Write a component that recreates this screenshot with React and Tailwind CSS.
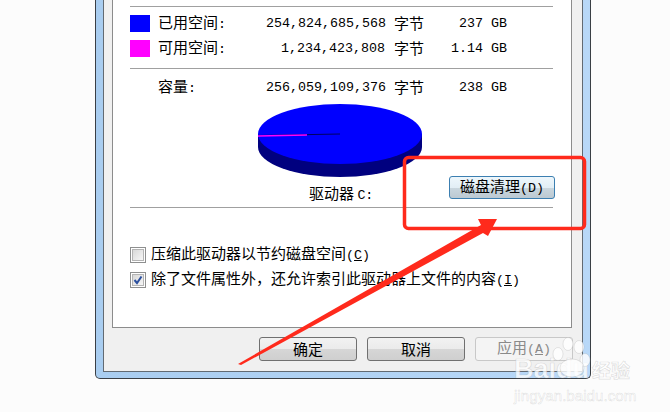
const mono = "font-['Liberation_Mono','Noto_Sans_CJK_SC',monospace] text-[13.33px]";
const cjk = "pb-[2px] font-['Noto_Sans_CJK_SC',sans-serif] text-[15px] leading-none";

function SizeRow({ color, label, bytes, size }) {
    return (
        <div className="grid h-[25px] grid-cols-[28px_108px_119px_9px_39px_74px] items-center text-black">
            {color ? <span className={`h-[17px] w-5 ${color}`} /> : <span />}
            <span className={cjk}>{label}<span className={mono}>:</span></span>
            <span className={`${mono} text-right`}>{bytes}</span>
            <span />
            <span className={cjk}>字节</span>
            <span className={`${mono} text-right`}>{size}</span>
        </div>
    );
}

function Check({ checked, children }) {
    return (
        <div className="flex h-[25px] items-center gap-[5px] text-black">
            <span className="flex size-4 items-center justify-center border border-[#8e8f8f] bg-white p-[1px]">
                <span className="flex size-full items-center justify-center border border-[#b4b4b4] bg-[linear-gradient(135deg,#d8d8d8,#f6f6f6)]">
                    {checked && (
                        <svg width="10" height="10" viewBox="0 0 10 10">
                            <path d="M1.5 5 L4 8 L8.5 1.5" fill="none" stroke="#2b4f9e" strokeWidth="2" />
                        </svg>
                    )}
                </span>
            </span>
            <span className={cjk}>{children}</span>
        </div>
    );
}

function DialogButton({ children, disabled }) {
    return (
        <button className={`flex h-6 w-[98px] items-center justify-center rounded-[3px] border ${disabled ? 'border-[#c8c8c8] bg-[#f4f4f4] text-[#8a8a8a]' : 'border-[#707070] bg-[linear-gradient(#f2f2f2_0%,#ebebeb_50%,#d6d6d6_52%,#cfcfcf_100%)] text-black'}`}>
            <span className={cjk}>{children}</span>
        </button>
    );
}

function Pie() {
    return (
        <svg width="166" height="76" viewBox="0 0 166 76" className="ml-[127px] mt-[3px] block">
            <path d="M1 31 V44 A82 30 0 0 0 165 44 V31 Z" fill="#00007f" />
            <ellipse cx="83" cy="31" rx="82" ry="30" fill="#0000ff" />
            <path d="M83 31 L1 32.5" stroke="#000060" strokeWidth="1" />
            <path d="M50 32 L1 33" stroke="#ff00ff" strokeWidth="1.5" />
        </svg>
    );
}

function Annotation() {
    return (
        <svg width="670" height="412" viewBox="0 0 670 412" className="pointer-events-none absolute inset-0">
            <rect x="404.5" y="157.5" width="180" height="71" rx="4" fill="none" stroke="#ff2a1c" strokeWidth="3.5" />
            <polygon points="238,364 241,365 483,233 488,236 497,219 478,219 481,225" fill="#ff2a1c" />
        </svg>
    );
}

function Watermark() {
    return (
        <div className="pointer-events-none absolute left-[514px] top-[356px] w-[125px] text-white/75">
            <svg width="44" height="44" viewBox="0 0 44 44" className="absolute left-[36px] top-[-20px]">
                <g fill="#ffffff" fillOpacity="0.8" stroke="#9a9a9a" strokeOpacity="0.3" strokeWidth="0.8">
                    <ellipse cx="8" cy="18" rx="5" ry="6.5" />
                    <ellipse cx="18" cy="8" rx="5" ry="6.5" />
                    <ellipse cx="29" cy="11" rx="5" ry="6.5" />
                    <ellipse cx="35" cy="24" rx="5" ry="6.5" />
                    <ellipse cx="22" cy="32" rx="12" ry="9" />
                </g>
            </svg>
            <div className="flex items-center gap-[3px] leading-none [-webkit-text-stroke:0.7px_rgba(150,150,150,0.3)]">
                <span className="font-['Liberation_Sans',sans-serif] text-[27px] font-bold">Baidu</span>
                <span className="font-['Noto_Sans_CJK_SC',sans-serif] text-[19px] font-bold">经验</span>
            </div>
            <div className="mt-[5px] font-['Liberation_Sans',sans-serif] text-[15.2px] leading-none [-webkit-text-stroke:0.5px_rgba(150,150,150,0.3)]">jingyan.baidu.com</div>
        </div>
    );
}

export default function App() {
    return (
        <div className="relative h-[412px] w-[670px] overflow-hidden bg-[#fcfcfc]">
            {/* window frame, top part is cut off by the screenshot */}
            <div className="ml-[95px] h-[379px] w-[496px] rounded-b-[5px] border-x border-b border-[#3a3f45] bg-[linear-gradient(90deg,#a9cdf0,#b8d8f8)] px-[7px] pb-[6px]">
                <div className="flex h-full flex-col border-x border-b border-[#626a72] bg-[#f0f0f0] pl-[8px] pr-[10px]">
                    {/* white tab page */}
                    <div className="h-[328px] border-x border-b border-[#8c8c8c] bg-white pl-[17px] pr-[18px] pt-[6px]">
                        <div className="border-t border-[#a0a0a0] pt-[4px]">
                            <SizeRow color="bg-[#0000ff]" label="已用空间" bytes="254,824,685,568" size="237 GB" />
                            <SizeRow color="bg-[#ff00ff]" label="可用空间" bytes="1,234,423,808" size="1.14 GB" />
                        </div>
                        <div className="mt-[7px] border-t border-[#a0a0a0] pt-[6px]">
                            <SizeRow label="容量" bytes="256,059,109,376" size="238 GB" />
                        </div>
                        <Pie />
                        <div className="-mr-[2px] -mt-[3px] flex h-[31px] items-start">
                            <span className="ml-[179px] mt-[9px] leading-none text-black">
                                <span className={cjk}>驱动器 </span><span className={mono}>C:</span>
                            </span>
                            <button className="ml-auto flex h-[23px] w-[106px] items-center justify-center rounded-[3px] border border-[#3c7fb1] bg-[linear-gradient(#eef7fc_0%,#e2eef5_50%,#c9d6de_52%,#bcc9d2_100%)] text-black">
                                <span className={cjk}>磁盘清理<span className={mono}>(D)</span></span>
                            </button>
                        </div>
                        <div className="border-t border-[#a0a0a0] pt-[34px]">
                            <Check>压缩此驱动器以节约磁盘空间<span className={mono}>(<u>C</u>)</span></Check>
                            <Check checked>除了文件属性外，还允许索引此驱动器上文件的内容<span className={mono}>(<u>I</u>)</span></Check>
                        </div>
                    </div>
                    <div className="-mr-px mt-[9px] flex justify-end gap-[10px]">
                        <DialogButton>确定</DialogButton>
                        <DialogButton>取消</DialogButton>
                        <DialogButton disabled>应用<span className={mono}>(<u>A</u>)</span></DialogButton>
                    </div>
                </div>
            </div>
            <Annotation />
            <Watermark />
        </div>
    );
}
